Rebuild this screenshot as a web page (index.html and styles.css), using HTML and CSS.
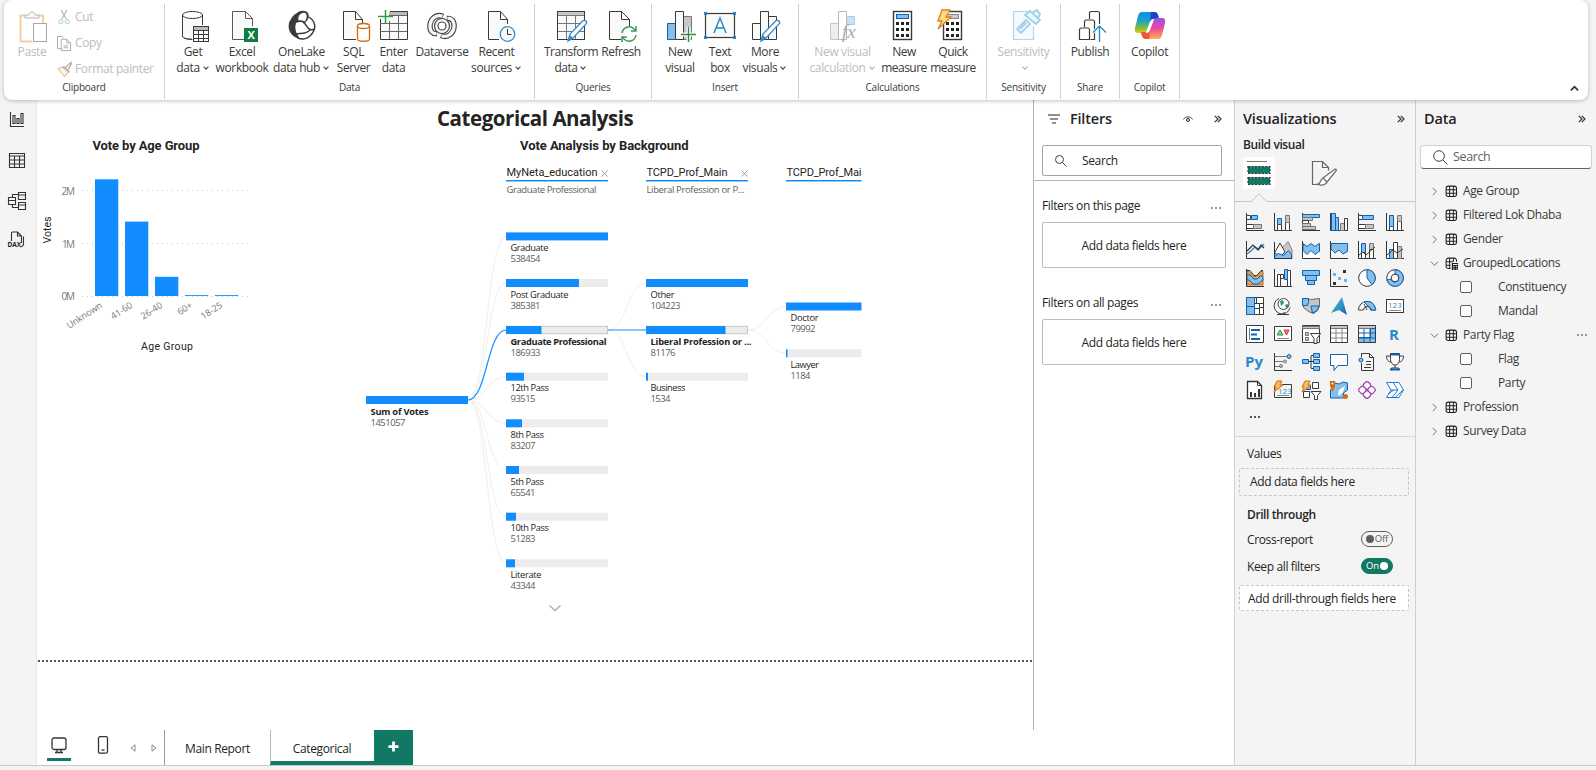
FILE: index.html
```html
<!DOCTYPE html>
<html lang="en">
<head>
<meta charset="utf-8">
<title>Categorical Analysis</title>
<link rel="stylesheet" href="styles.css">
</head>
<body>
<svg class="defs" width="0" height="0">
  <defs>
    <symbol id="tbl" viewBox="0 0 14 14"><rect x="1.2" y="1.2" width="11.2" height="11.2" rx="2.4"/><path d="M5 1v12M9 1v12M1 5h12M1 9h12"/></symbol>
    <symbol id="tblcalc" viewBox="0 0 14 14"><path d="M6 12.400H3.600a2.400 2.400 0 0 1-2.400-2.400V3.600a2.400 2.400 0 0 1 2.400-2.400H10a2.400 2.400 0 0 1 2.400 2.400V5M5 1v12M9 1v4M1 5h8M1 9h5"/><path d="M8 7h6v7H8zM8 9.300h6M8 11.600h6M11 9v5" stroke-width="1.300"/></symbol>
    <symbol id="right" viewBox="0 0 10 10"><path d="M3 1l4 4-4 4"/></symbol>
    <symbol id="down" viewBox="0 0 10 10"><path d="M1 3l4 4 4-4"/></symbol>
    <symbol id="dbl" viewBox="0 0 8 8"><path d="M.8.8L4 4 .8 7.200M3.800.8L7 4 3.800 7.200"/></symbol>
    <symbol id="axes" viewBox="0 0 18 18"><path d="M.5 0v17.500H18" fill="none" stroke="#333"/></symbol>
    <linearGradient id="cpA" x1="0" y1="0" x2="0" y2="1"><stop offset="0" stop-color="#0d91e1"/><stop offset=".4" stop-color="#1a9fd0"/><stop offset=".75" stop-color="#7abf3c"/><stop offset="1" stop-color="#f5c400"/></linearGradient>
    <linearGradient id="cpB" x1="0" y1="0" x2="0" y2="1"><stop offset="0" stop-color="#9a52ee"/><stop offset=".5" stop-color="#ea4a9a"/><stop offset="1" stop-color="#ffb152"/></linearGradient>
    <linearGradient id="arc" x1="0" y1="0" x2="1" y2="1"><stop offset="0" stop-color="#5bc0c8"/><stop offset=".6" stop-color="#2d8fc4"/><stop offset="1" stop-color="#1458a8"/></linearGradient>
  </defs>
</svg>

<header class="ribbon">
  <section class="group clipboard">
    <div class="items">
      <button class="paste off"><svg class="ico" viewBox="0 0 32 32"><path d="M10 4.500H4.500v26H16M22 4.500h5v8" fill="none" stroke="#f7cf9c" stroke-width="2"/><path d="M9 7V4h4c0-4 6-4 6 0h4v3z" fill="#fafafa" stroke="#b5b5b5"/><rect x="17.500" y="12.500" width="13" height="18" fill="#fff" stroke="#a8a8a8"/></svg><span>Paste</span></button>
      <div class="edits off">
        <div><svg viewBox="0 0 16 16"><path d="M4.500 0l5.500 10M10.500 0L5 10" stroke="#a8a8a8" fill="none" stroke-width="1.100"/><circle cx="4" cy="12.500" r="2.200" fill="none" stroke="#9cc8e6"/><circle cx="11" cy="12.500" r="2.200" fill="none" stroke="#9cc8e6"/></svg>Cut</div>
        <div><svg viewBox="0 0 16 16"><path d="M5 13.500H.5V.5h5l2 2M4.500 3.500h6l4 4v8h-10zM10.500 3.500v4h4M7 10.500h5M7 12.500h5" fill="none" stroke="#aaa"/></svg>Copy</div>
        <div><svg viewBox="0 0 16 16"><path d="M1 7l7-2 5 5-5 5.500z" fill="#fdf3e6" stroke="#f0c596" stroke-width="1.300"/><path d="M6 5l7 6M9 6l4-4 2-1.500v2L12 8" fill="none" stroke="#aaa" stroke-width="1.400"/></svg>Format painter</div>
      </div>
    </div>
    <h6>Clipboard</h6>
  </section>
  <section class="group data">
    <div class="items">
      <button><svg class="ico" viewBox="0 0 32 32"><path d="M5.500 4v21c0 2 4 3.500 10 3.500M25.500 4v10" fill="none" stroke="#3b3a39"/><path d="M6 4v21c1 2 5 3 9 3V15h10V4z" fill="#fafafa"/><ellipse cx="15.500" cy="4" rx="10" ry="3.500" fill="#fff" stroke="#3b3a39"/><path d="M5.500 4v21c0 2 4 3 9 3M25.500 4v10" fill="none" stroke="#3b3a39"/><rect x="16.500" y="15.500" width="15" height="15" fill="#fff" stroke="#3b3a39"/><path d="M17 17.500h14" stroke="#bbb" stroke-width="3"/><path d="M16.500 19.500h15M16.500 23.500h15M16.500 27.500h15M21.500 19v12M26.500 19v12" stroke="#3b3a39"/></svg><span>Get</span><span>data<i></i></span></button>
      <button><svg class="ico" viewBox="0 0 32 32"><path d="M18 28.500H6.500V.5h13l7 7V15M19.500.5v7h7" fill="#fafafa" stroke="#5a5a5a"/><rect x="18" y="17" width="14" height="14" fill="#107c41"/><text x="25" y="28" class="xl">X</text></svg><span>Excel</span><span>workbook</span></button>
      <button><svg class="ico" viewBox="0 0 32 32"><path d="M11 2c3-3 9-3 11 0 2 4 0 7-3 10C14 10 9 11 5 16 2 12 5 5 11 2z" fill="#3b3a39"/><path d="M12 9c-1-5 3-7 6-8 4 1 4 6 1 10-4-2-7-1-8-1z" fill="#fff" stroke="#3b3a39"/><path d="M4 9c-4 9 1 17 10 19-4-5-6-11-4-16-2 0-4 2-5 4z" fill="#3b3a39"/><path d="M23 6c7 5 8 12 1 19-3 3-8 4-12 2-3-5-5-10-3-15M17 11c5 3 4 10 12 7M12 27c-5-8 5-1 12-8" fill="none" stroke="#3b3a39" stroke-width="1.500"/></svg><span>OneLake</span><span>data hub<i></i></span></button>
      <button><svg class="ico" viewBox="0 0 32 32"><path d="M18 28.500H5.500V.5h12l7 8V12M17.500.5v8h7" fill="#fafafa" stroke="#3b3a39"/><path d="M19.500 15v13c0 3 12 3 12 0V15" fill="#fff" stroke="#d8690f" stroke-width="1.300"/><ellipse cx="25.500" cy="15" rx="6" ry="2.500" fill="#fff" stroke="#d8690f" stroke-width="1.300"/></svg><span>SQL</span><span>Server</span></button>
      <button><svg class="ico" viewBox="0 0 32 32"><path d="M2.500 8v20.500h27V.5H12" fill="#fafafa" stroke="#3b3a39"/><path d="M11 2.500h18" stroke="#bbb" stroke-width="3"/><path d="M11 4.500h18M2 12.500h27M2 20.500h27M11.500 10v18M20.500 5v23" stroke="#666"/><path d="M7.500-1v13M0 5.500h15" stroke="#2ba144" stroke-width="1.500"/></svg><span>Enter</span><span>data</span></button>
      <button><svg class="ico" viewBox="0 0 32 32"><path d="M17 5.500C10 2.500 4.500 8 4 14c-.5 6 2.500 9 7 8.500" fill="none" stroke="#444" stroke-width="5.500"/><path d="M16.500 5.300C10 3 4.500 8 4 14c-.5 6 2.500 9 6.500 8.500" fill="none" stroke="#f8f8f8" stroke-width="3.200"/><path d="M15 24.500c7 3 12.500-2.500 13-8.500.5-6-2.500-9-7-8.500" fill="none" stroke="#444" stroke-width="5.500"/><path d="M15.500 24.700C22 27 27.500 22 28 16c.5-6-2.500-9-6.500-8.500" fill="none" stroke="#f8f8f8" stroke-width="3.200"/><circle cx="16" cy="15" r="7.500" fill="#f8f8f8" stroke="#444" stroke-width="1.200"/><circle cx="16" cy="15" r="4" fill="#fff" stroke="#444" stroke-width="1.200"/></svg><span>Dataverse</span></button>
      <button><svg class="ico" viewBox="0 0 32 32"><path d="M18 28.500H7.500V.5h12l7 8V13M19.500.5v8h7" fill="#fafafa" stroke="#3b3a39"/><circle cx="26.500" cy="23" r="7.300" fill="#fafafa" stroke="#2f8ccc" stroke-width="1.300"/><path d="M26.500 18v5.500h4" stroke="#3b3a39" fill="none"/></svg><span>Recent</span><span>sources<i></i></span></button>
    </div>
    <h6>Data</h6>
  </section>
  <section class="group queries">
    <div class="items">
      <button><svg class="ico" viewBox="0 0 32 32"><rect x="2.500" y=".5" width="27" height="28" fill="#fafafa" stroke="#3b3a39"/><path d="M3 2.500h26" stroke="#c8c8c8" stroke-width="3"/><path d="M3 4.500h26M3 12.500h26M3 20.500h26M11.500 5v23M20.500 5v23" stroke="#777"/><path d="M13 30l2-7L28 9.500c3-1 4 2 3.500 3L18 27z" fill="#fff" stroke="#2f8ccc" stroke-width="1.300"/><path d="M13 30l2-6 3 3z" fill="#2f8ccc"/></svg><span>Transform</span><span>data<i></i></span></button>
      <button><svg class="ico" viewBox="0 0 32 32"><path d="M16 28.500H4.500V.5h12l8 8V15M16.500.5v8h8" fill="#fafafa" stroke="#3b3a39"/><path d="M17 22a7 7 0 0 1 12-4l2 2M31 15v5h-5M31 24a7 7 0 0 1-12 4l-2-2M17 31v-5h5" fill="none" stroke="#3f9b57" stroke-width="1.500"/></svg><span>Refresh</span></button>
    </div>
    <h6>Queries</h6>
  </section>
  <section class="group insert">
    <div class="items">
      <button><svg class="ico" viewBox="0 0 32 32"><path d="M3.500 12.500h8v16h-8z" fill="#83beec" stroke="#0e62b0"/><path d="M19.500 5.500h8v23h-8z" fill="#c8c6c4" stroke="#777"/><path d="M11.500.5h8v28h-8z" fill="#fafafa" stroke="#3b3a39"/><path d="M24.500 16v15M17 23.500h15" stroke="#fff" stroke-width="4"/><path d="M24.500 16v15M17 23.500h15" stroke="#2e8b42" stroke-width="1.400"/></svg><span>New</span><span>visual</span></button>
      <button><svg class="ico" viewBox="0 0 32 32"><rect x="1.500" y="2.500" width="29" height="24" fill="#fafafa" stroke="#3b3a39" stroke-width="1.200"/><path d="M0 1h3v3H0zM29 1h3v3h-3zM0 25h3v3H0zM29 25h3v3h-3z" fill="#2b88c8"/><path d="M10 22l6-15 6 15M12 17h8" fill="none" stroke="#2b88c8" stroke-width="1.500"/></svg><span>Text</span><span>box</span></button>
      <button><svg class="ico" viewBox="0 0 32 32"><path d="M3.500 12.500h8v16h-8zM19.500 5.500h8v23h-8zM11.500.5h8v28h-8z" fill="#fafafa" stroke="#3b3a39"/><path d="M12 30l2-7L27 9.500c3-1 4 2 3.500 3L17 27z" fill="#fff" stroke="#2f8ccc" stroke-width="1.300"/><path d="M12 30l2-6 3 3z" fill="#2f8ccc"/></svg><span>More</span><span>visuals<i></i></span></button>
    </div>
    <h6>Insert</h6>
  </section>
  <section class="group calc">
    <div class="items">
      <button class="off"><svg class="ico" viewBox="0 0 32 32"><path d="M19.500 5.500h8v8h-8z" fill="#c5e2f7" stroke="#a5cdea"/><path d="M3.500 12.500h8v16h-8z" fill="#eee" stroke="#c5c5c5"/><path d="M11.500.5h8v28h-8z" fill="#fff" stroke="#b8b8b8"/><text x="15" y="27" class="fx">fx</text></svg><span>New visual</span><span>calculation<i></i></span></button>
      <button><svg class="ico" viewBox="0 0 32 32"><rect x="5.500" y=".5" width="18" height="28" fill="#fff" stroke="#3b3a39" stroke-width="1.400"/><rect x="8.500" y="3.500" width="12" height="4" fill="#83beec" stroke="#0e62b0"/><path d="M8 12.500h3m2 0h3m2 0h3M8 18.500h3m2 0h3m2 0h3M8 24.500h3m2 0h3m2 0h3" stroke="#222" stroke-width="3"/></svg><span>New</span><span>measure</span></button>
      <button><svg class="ico" viewBox="0 0 32 32"><rect x="6.500" y=".5" width="18" height="28" fill="#fff" stroke="#3b3a39" stroke-width="1.400"/><rect x="9.500" y="3.500" width="12" height="4" fill="#ccc" stroke="#888"/><path d="M9 12.500h3m2 0h3m2 0h3M9 18.500h3m2 0h3m2 0h3M9 24.500h3m2 0h3m2 0h3" stroke="#222" stroke-width="3"/><path d="M5-1h8L9 6h5L1 18l4-8H1z" fill="#fbdc8a" stroke="#e0801a" stroke-width="1.300"/></svg><span>Quick</span><span>measure</span></button>
    </div>
    <h6>Calculations</h6>
  </section>
  <section class="group sens">
    <div class="items">
      <button class="off"><svg class="ico" viewBox="0 0 32 32"><path d="M21 .5H5.500v28h20V15" fill="#f5faff" stroke="#b0d5ee" stroke-width="1.200"/><path d="M9 18l9-9 4 4-9 9zM17 4l5-4 10 9-4 4zM24 2l5-3 3 4-2 4M12 18l6-6" fill="#eef7fd" stroke="#a2cfec" stroke-width="1.800"/></svg><span>Sensitivity</span><span><i></i></span></button>
    </div>
    <h6>Sensitivity</h6>
  </section>
  <section class="group share">
    <div class="items">
      <button><svg class="ico" viewBox="0 0 32 32"><path d="M16 28.500H5.500V19q0-2 2-2h7q1 0 1 2v9M10.500 16v-5q0-2 2-2h6q2 0 2 2v17.500h-4M15.500 8V2.500q0-2 2-2h6q2 0 2 2V13" fill="none" stroke="#3b3a39" stroke-width="1.200"/><path d="M25.500 31V15M19 21.500l6.500-6.500 6.500 6.500" fill="none" stroke="#fff" stroke-width="3"/><path d="M25.500 31V15M19 21.500l6.500-6.500 6.500 6.500" fill="none" stroke="#2f8ccc" stroke-width="1.400"/></svg><span>Publish</span></button>
    </div>
    <h6>Share</h6>
  </section>
  <section class="group copilot">
    <div class="items">
      <button><svg class="ico" viewBox="0 0 32 32"><path d="M8 1h13q2 0 3 3l1 4h-5q-3 0-4 3l-3 8q-1 3-4 3H4q-4 0-3-5L4 5q1-4 4-4z" fill="url(#cpA)"/><path d="M17 1h4q2 0 3 3l1 4h-5q-3 0-4 3c1-4 0-8 1-10z" fill="#1b44c8"/><path d="M24 28H11q-2 0-3-3l-1-4h5q3 0 4-3l3-8q1-3 4-3h5q4 0 3 5l-3 12q-1 4-4 4z" fill="url(#cpB)"/><path d="M15 28h-4q-2 0-3-3l-1-4h5q3 0 4-3c-1 4 0 8-1 10z" fill="#f2553d"/><path d="M20 8h-1q-2 0-3 3l-3 8-1 3h1q2 0 3-3l3-8z" fill="#fff"/></svg><span>Copilot</span></button>
    </div>
    <h6>Copilot</h6>
  </section>
  <svg class="collapse" viewBox="0 0 10 10"><path d="M1 7l4-4 4 4"/></svg>
</header>

<div class="workspace">
  <nav class="rail">
    <svg viewBox="0 0 18 18"><path d="M2.500 1v14.500H16M5 4.500h2v8H5zM9 7.500h2v5H9zM13 2.500h2v10h-2z"/></svg>
    <svg viewBox="0 0 18 18"><path d="M1.500 2.500h15v14h-15zM1.500 5h15M1.500 9h15M1.500 13h15M6.500 5v11.500M11.500 5v11.500"/></svg>
    <svg viewBox="0 0 18 18"><path d="M.5 6.500h7v7h-7zM.5 9.500h7M10.500 1.500h7v7h-7zM10.500 4h7M10.500 11.500h7v7h-7zM10.500 14h7M4.500 6V3.500h6M4.500 14v2.500h6"/></svg>
    <svg viewBox="0 0 18 18"><path d="M3.500 10V2q0-1 1-1h5l4 4v7M9.500 1v4h4M15.500 5.500v7q0 3-3 3.500"/><text x="-.5" y="15.500" class="dax">DAX</text></svg>
  </nav>

  <div class="middle">
    <div class="middle-top">
      <main class="canvas">
        <h1>Categorical Analysis</h1>
        <div class="visuals">
          <svg class="bars" viewBox="38 135 322 235">
            <text class="vt" x="92.500" y="150" textLength="107">Vote by Age Group</text>
            <path class="grid" d="M82 190.500H251M82 243.500H251M82 296.500H251"/>
            <g class="tick"><text x="61.500" y="194.500" textLength="13.500">2M</text><text x="62" y="247.500" textLength="13">1M</text><text x="61.500" y="299.500" textLength="13.500">0M</text></g>
            <g fill="#118dff"><rect x="95" y="179.300" width="23.300" height="116.700"/><rect x="125" y="221.600" width="23.300" height="74.400"/><rect x="155" y="276.800" width="23.300" height="19.200"/><rect x="185" y="295.100" width="23.300" height=".9"/><rect x="215" y="295.100" width="23.300" height=".9"/></g>
            <g class="tick end"><text transform="translate(103 307) rotate(-33)">Unknown</text><text transform="translate(133 307) rotate(-33)">41-60</text><text transform="translate(163 307) rotate(-33)">26-40</text><text transform="translate(193 307) rotate(-33)">60+</text><text transform="translate(223 307) rotate(-33)">18-25</text></g>
            <text class="ax" transform="translate(51 243.500) rotate(-90)" textLength="27">Votes</text>
            <text class="ax" x="141" y="350" textLength="52">Age Group</text>
          </svg>
          <svg class="tree" viewBox="360 135 510 490">
            <text class="vt" x="520" y="150" textLength="168.500">Vote Analysis by Background</text>
            <g class="hd"><text x="506.500" y="176" textLength="91">MyNeta_education</text><text x="646.500" y="176" textLength="81">TCPD_Prof_Main</text><text x="786.500" y="176" textLength="75">TCPD_Prof_Mai</text></g>
            <path d="M506 180.700h102M646 180.700h102M786 180.700h75.500" stroke="#118dff" stroke-width="1.400"/>
            <path d="M601.500 170.500l6 6m0-6l-6 6M741.500 170.500l6 6m0-6l-6 6" stroke="#999" fill="none"/>
            <g class="val"><text x="506.500" y="193" textLength="90">Graduate Professional</text><text x="646.500" y="193" textLength="98">Liberal Profession or P...</text></g>
            <path class="link" d="M468 400C487 400 487 236.400 506 236.400M468 400C487 400 487 283 506 283M468 400C487 400 487 376.700 506 376.700M468 400C487 400 487 423.300 506 423.300M468 400C487 400 487 470 506 470M468 400C487 400 487 516.700 506 516.700M468 400C487 400 487 563.300 506 563.300M608 330C627 330 627 283 646 283M608 330C627 330 627 376.700 646 376.700M748 330C767 330 767 306.500 786 306.500M748 330C767 330 767 353.300 786 353.300"/>
            <path class="link on" d="M468 400C487 400 487 330 506 330M608 330H646"/>
            <g fill="#ececec"><rect x="506" y="279" width="102" height="8"/><rect x="506.500" y="326.300" width="101" height="7.400" stroke="#c8c8c8"/><rect x="506" y="372.700" width="102" height="8"/><rect x="506" y="419.300" width="102" height="8"/><rect x="506" y="466" width="102" height="8"/><rect x="506" y="512.700" width="102" height="8"/><rect x="506" y="559.300" width="102" height="8"/><rect x="646.500" y="326.300" width="101" height="7.400" stroke="#c8c8c8"/><rect x="646" y="372.700" width="102" height="8"/><rect x="786" y="349.300" width="75.500" height="8"/></g>
            <g fill="#118dff"><rect x="366" y="396" width="102" height="8"/><rect x="506" y="232.400" width="102" height="8"/><rect x="506" y="279" width="73" height="8"/><rect x="506" y="326" width="35.500" height="8"/><rect x="506" y="372.700" width="18" height="8"/><rect x="506" y="419.300" width="16" height="8"/><rect x="506" y="466" width="13" height="8"/><rect x="506" y="512.700" width="10" height="8"/><rect x="506" y="559.300" width="9" height="8"/><rect x="646" y="279" width="102" height="8"/><rect x="646" y="326" width="79.500" height="8"/><rect x="646" y="372.700" width="2" height="8"/><rect x="786" y="302.500" width="75.500" height="8"/><rect x="786" y="349.300" width="1.500" height="8"/></g>
            <g class="nm"><text x="370.500" y="415" textLength="58" class="b">Sum of Votes</text><text x="510.500" y="251.200" textLength="38">Graduate</text><text x="510.500" y="298" textLength="58">Post Graduate</text><text x="510.500" y="345" textLength="96" class="b">Graduate Professional</text><text x="510.500" y="391.300" textLength="38.500">12th Pass</text><text x="510.500" y="438" textLength="33.500">8th Pass</text><text x="510.500" y="485" textLength="33.500">5th Pass</text><text x="510.500" y="531" textLength="38.500">10th Pass</text><text x="510.500" y="578" textLength="31">Literate</text><text x="650.500" y="298" textLength="24">Other</text><text x="650.500" y="345" textLength="101" class="b">Liberal Profession or ...</text><text x="650.500" y="391.300" textLength="35">Business</text><text x="790.500" y="321.300" textLength="28">Doctor</text><text x="790.500" y="368" textLength="28.500">Lawyer</text></g>
            <g class="val"><text x="370.500" y="426" textLength="35">1451057</text><text x="510.500" y="262" textLength="30">538454</text><text x="510.500" y="309" textLength="30">385381</text><text x="510.500" y="356" textLength="30">186933</text><text x="510.500" y="402.300" textLength="25">93515</text><text x="510.500" y="449" textLength="25">83207</text><text x="510.500" y="496" textLength="25">65541</text><text x="510.500" y="542" textLength="25">51283</text><text x="510.500" y="589" textLength="25">43344</text><text x="650.500" y="309" textLength="30">104223</text><text x="650.500" y="356" textLength="25">81176</text><text x="650.500" y="402.300" textLength="20">1534</text><text x="790.500" y="332" textLength="25">79992</text><text x="790.500" y="379" textLength="20">1184</text></g>
            <path d="M549.500 605.500l5.500 5 5.500-5" fill="none" stroke="#b0b0b0" stroke-width="1.600"/>
          </svg>
        </div>
        <div class="page-edge"></div>
      </main>

      <aside class="filters">
        <div class="f-head">
          <svg class="funnel" viewBox="0 0 12 10"><path d="M0 1h12M2 5h8M4 9h4"/></svg>
          <h2>Filters</h2>
          <svg class="eye" viewBox="0 0 10 8"><path d="M.5 4.500C2 1 8 1 9.500 4.500" fill="none" stroke="#444"/><circle cx="5" cy="5" r="1.500" fill="none" stroke="#222"/></svg>
          <svg class="dbl"><use href="#dbl"/></svg>
        </div>
        <div class="f-search"><svg viewBox="0 0 12 12"><circle cx="4.500" cy="4.500" r="4"/><path d="M7.500 7.500l4 4"/></svg><span>Search</span></div>
        <div class="f-sec"><div class="f-title"><span>Filters on this page</span><b class="dots"></b></div><div class="well">Add data fields here</div></div>
        <div class="f-sec"><div class="f-title"><span>Filters on all pages</span><b class="dots"></b></div><div class="well">Add data fields here</div></div>
      </aside>
    </div>

    <footer class="tabs">
      <span class="view on"><svg viewBox="0 0 16 17"><rect x="1" y="1" width="14" height="11.500" rx="2"/><path d="M6 13v2M10 13v2M4 15.500h8"/></svg></span>
      <span class="view"><svg viewBox="0 0 16 18"><rect x="3.500" y=".7" width="9" height="16.500" rx="1.500"/><path d="M6.500 14h3"/></svg></span>
      <svg class="tri" viewBox="0 0 6 8"><path d="M5 .8v6.400L1 4z"/></svg>
      <svg class="tri" viewBox="0 0 6 8"><path d="M1 .8v6.400L5 4z"/></svg>
      <span class="tab main">Main Report</span>
      <span class="tab active">Categorical</span>
      <span class="add"><svg viewBox="0 0 12 12"><path d="M6 .5v11M.5 6h11"/></svg></span>
    </footer>
  </div>

  <aside class="viz">
    <div class="p-head"><h2>Visualizations</h2><svg class="dbl"><use href="#dbl"/></svg></div>
    <h3>Build visual</h3>
    <div class="modes">
      <span class="mode on"><svg viewBox="0 0 32 32"><path d="M4 4.500h20" stroke="#777"/><path d="M5 9.500h22v7H5zM5 20.500h22v7H5z" fill="#117865" stroke="#333" stroke-width="1.200" stroke-dasharray="2 1.500"/></svg></span>
      <span class="mode"><svg viewBox="0 0 32 32"><path d="M12 27.500H4.500v-23h10l6 6v3M14.500 4.500v6h6" fill="none" stroke="#666" stroke-width="1.200"/><path d="M15 21L27 12q2 0 1 2l-9 11zM10 27c3 0 2-5 5-6l4 4c-1 3-6 4-9 2z" fill="#fff" stroke="#666" stroke-width="1.200"/></svg></span>
    </div>
    <svg class="rule" viewBox="0 0 180 10"><path d="M0 8.500H16.500L24 .8l7.500 7.700H180"/></svg>
    <div class="gallery">
      <svg viewBox="0 0 18 18"><use href="#axes"/><path d="M.5 2.500h4v4h-4zM.5 11.500h7v4h-7z" class="w"/><path d="M5.500 2.500h6v4h-6z" class="u"/><path d="M7.500 11.500h8v4h-8z" class="g"/></svg>
      <svg viewBox="0 0 18 18"><use href="#axes"/><path d="M3.500 11.500h4v6h-4zM11.500 9.500h4v8h-4z" class="w"/><path d="M3.500 5.500h4v6h-4z" class="u"/><path d="M11.500 2.500h4v7h-4z" class="g"/></svg>
      <svg viewBox="0 0 18 18"><use href="#axes"/><path d="M.5 1.500h17v3H.5z" class="u"/><path d="M.5 4.500h10v3H.5zM.5 13.500h13v3H.5z" class="g"/><path d="M.5 7.500h6v3h-6z" class="w"/><path d="M.5 10.500h8v3h-8z" class="g"/></svg>
      <svg viewBox="0 0 18 18"><use href="#axes"/><path d="M1.500.5h4v17h-4zM5.500 4.500h3v13h-3z" class="u"/><path d="M10.500 10.500h4v7h-4z" class="g"/><path d="M14.500 5.500h3v12h-3z" class="w"/></svg>
      <svg viewBox="0 0 18 18"><use href="#axes"/><path d="M.5 2.500h4v4h-4zM.5 11.500h7v4h-7z" class="w"/><path d="M4.500 2.500h11v4h-11z" class="u"/><path d="M7.500 11.500h8v4h-8z" class="g"/></svg>
      <svg viewBox="0 0 18 18"><use href="#axes"/><path d="M3.500 13.500h4v4h-4zM11.500 8.500h4v9h-4z" class="w"/><path d="M3.500 2.500h4v11h-4z" class="u"/><path d="M11.500 2.500h4v6h-4z" class="g"/></svg>

      <svg viewBox="0 0 18 18"><use href="#axes"/><path d="M1 13l5-4 3-3 4 2 5-5" fill="none" stroke="#2b88c8" stroke-width="1.300"/><path d="M1 10l6-6 5 5 3-5 3 3" fill="none" stroke="#333" stroke-width="1.200"/></svg>
      <svg viewBox="0 0 18 18"><path d="M7 8l7-7.500 4 8v9H9z" fill="#c8c6c4" stroke="#888"/><path d="M.5 12L6 2l5 9-4 4z" class="w"/><path d="M.5 17.500v-2l4-3 5 2 5-5 3 4v4z" class="u"/><path d="M.5 1v16.500H18" fill="none" stroke="#333"/></svg>
      <svg viewBox="0 0 18 18"><path d="M1 9l5 4 4-4 3 3 4-3v8H1z" fill="#fff"/><path d="M1 2.500l4 3 4-3 4 3 4-3h.5v8h-.500l-4 3-4-4-4 4-4-4z" class="u"/><use href="#axes"/></svg>
      <svg viewBox="0 0 18 18"><path d="M1 2.500h16.500v8L13 13l-4-4-4 3-4-4z" class="u"/><use href="#axes"/></svg>
      <svg viewBox="0 0 18 18"><use href="#axes"/><path d="M3.500 2.500h4v9h-4z" class="u"/><path d="M11.500 2.500h4v6h-4z" class="g"/><path d="M3.500 11.500h4v6h-4zM11.500 8.500h4v9h-4z" class="w"/><path d="M1 14l4-3 3 3 9-8" class="k"/></svg>
      <svg viewBox="0 0 18 18"><use href="#axes"/><path d="M3.500 8.500h4v9h-4z" class="u"/><path d="M11.500 5.500h4v12h-4z" class="g"/><path d="M7.500 1.500h4v16h-4z" class="w"/><path d="M1 14l6-5 4 3 6-4" class="k"/></svg>

      <svg viewBox="0 0 18 18"><path d="M1 10l3 0 5 4 8-4v6H1z" fill="#f2a04a" stroke="#b8600c"/><path d="M1 2.500h2l5 5h2l5-5h2v4l-5 4H7l-6-4z" fill="#f2a04a" stroke="#b8600c"/><path d="M1 6h3l4 4h3l3-3h3v4l-5 4H7l-4-4H1z" class="u"/><path d="M1 1.500h3l4 5h3l4-5h2" class="k"/><use href="#axes"/></svg>
      <svg viewBox="0 0 18 18"><use href="#axes"/><path d="M3.500 5.500h3v12h-3zM6.500 5.500h3v4h-3zM13.500 1.500h3v16h-3z" class="w"/><path d="M10.500.5h3v10h-3z" class="u"/></svg>
      <svg viewBox="0 0 18 18"><path d="M.5 1.500h17v5H.5zM3.500 6.500h11v5h-11zM5.500 11.500h7v4h-7z" class="u"/></svg>
      <svg viewBox="0 0 18 18"><use href="#axes"/><path d="M3 4h3v3H3zM8 8h3v3H8zM14 10h3v3h-3z" fill="#6cb4ea"/><path d="M13 1h3v3h-3zM3 13h3v3H3z" fill="#333"/></svg>
      <svg viewBox="0 0 18 18"><circle cx="9" cy="9" r="8.300" class="w"/><path d="M9 .7a8.300 8.300 0 0 1 5 14.800L9 9z" class="u"/></svg>
      <svg viewBox="0 0 18 18"><circle cx="9" cy="9" r="8.300" class="w"/><path d="M9 .7A8.300 8.300 0 1 1 1 11l4-1a4 4 0 1 0 4-5z" class="u"/><circle cx="9" cy="9" r="3.800" class="w"/></svg>

      <svg viewBox="0 0 18 18"><path d="M.5.5h17v17H.5z" class="w"/><path d="M.5.5h8v9h-8zM.5 9.500h8v8h-8z" class="u"/><path d="M8.500 6.500h9M13.500 6.500v11M8.500 11.500h5M13.500 10.500h4M10.500.5v6" class="k"/></svg>
      <svg viewBox="0 0 18 18"><circle cx="9.500" cy="7" r="5.500" fill="#fff" stroke="#444"/><path d="M6 4l3-1 1 3-3 3zM11 8l3-1v3l-2 1z" fill="#2e9b57"/><path d="M5 1.500a8 8 0 1 0 11 9M10 15v2.500M3 17.500h12" class="k"/></svg>
      <svg viewBox="0 0 18 18"><path d="M.5 1.500h5l3 1 9-1v7l-2 5-4 3-5-2-5-4z" fill="#c8c6c4" stroke="#666"/><path d="M.5 1.500h6v4l-1 3h-5zM9 9h8.500l-3 5-4 2z" class="u"/></svg>
      <svg viewBox="0 0 18 18"><path d="M12 0l5 18-8-5-8 3z" fill="url(#arc)"/></svg>
      <svg viewBox="0 0 18 18"><path d="M.5 13a8.500 8.500 0 0 1 17 0h-5a3.500 3.500 0 0 0-7 0z" class="w"/><path d="M6 5q7-2 10 3l2 5h-5q0-3-3-4z" class="u"/><path d="M9 13L6 7" class="k"/></svg>
      <svg viewBox="0 0 18 18"><rect x=".5" y="2.500" width="17" height="13" class="w"/><text x="2" y="11" class="n">123</text><path d="M3 13.500h12" stroke="#888"/></svg>

      <svg viewBox="0 0 18 18"><path d="M.5.5h17v17H.5z" class="w"/><path d="M3.500 3v12" stroke="#777"/><path d="M5 5h9M5 9.500h6M5 14h9" stroke="#0e62b0" stroke-width="2"/></svg>
      <svg viewBox="0 0 18 18"><path d="M.5 1.500h17v14H.5z" class="w"/><path d="M3 10l3-5 3 5z" fill="#8fd19e" stroke="#2e8b42"/><path d="M10 5h5l-2.500 5z" fill="#f08080" stroke="#d13438"/><path d="M3 13.500h12" stroke="#888"/></svg>
      <svg viewBox="0 0 18 18"><path d="M.5.5h17v17H.5z" class="w"/><path d="M.5 1.500h17v2H.5z" class="g"/><path d="M3.500 7.500h3v3h-3zM3.500 12.500h3v3h-3z" class="g"/><path d="M8.500 8.500h10l-3.500 5v5h-3v-5z" class="w"/></svg>
      <svg viewBox="0 0 18 18"><path d="M.5.5h17v17H.5z" class="w"/><path d="M.5.5h17v3H.5z" class="g"/><path d="M6 4v13M12 4v13M1 8h16M1 13h16" stroke="#888"/><path d="M.5.5h17v17H.5z" class="k"/></svg>
      <svg viewBox="0 0 18 18"><path d="M.5.5h17v17H.5z" class="w"/><path d="M.5.5h17v3H.5z" class="g"/><path d="M12.500 3.500h5v14H.5v-5h12z" class="u"/><path d="M6 4v13M12 4v13M1 8h16M1 13h16" stroke="#0e62b0"/><path d="M.5.5h17v17H.5z" class="k"/></svg>
      <svg viewBox="0 0 18 18"><text x="3" y="14.500" class="r">R</text></svg>

      <svg viewBox="0 0 18 18"><text x="-1" y="14" class="r">Py</text></svg>
      <svg viewBox="0 0 18 18"><use href="#axes"/><path d="M1 3.500h12M1 8.500h8M1 13.500h5" stroke="#777"/><circle cx="15" cy="3.500" r="2" class="u"/><circle cx="11" cy="8.500" r="1.500" class="g"/><circle cx="7" cy="13" r="1.500" class="g"/></svg>
      <svg viewBox="0 0 18 18"><path d="M6 8.500h5M9 3v12M9 2.500h3M9 15.500h3" stroke="#333"/><path d="M.5 6.500h6v4h-6zM11.500.5h6v4h-6zM11.500 6.500h6v4h-6zM11.500 13.500h6v4h-6z" class="u"/></svg>
      <svg viewBox="0 0 18 18"><path d="M.5 1.500h17v11H8l-4 5v-5H.5z" fill="#fff" stroke="#0e62b0"/></svg>
      <svg viewBox="0 0 18 18"><path d="M3.500 4V.5h8l4 4v13h-12V10M11.500.5v4h4M8 8.500h5M8 11.500h5M6 14.500h7" class="k"/><circle cx="3" cy="7" r="2" class="u"/></svg>
      <svg viewBox="0 0 18 18"><path d="M4.500 3h-4c0 4 2 6 5 6M13.500 3h4c0 4-2 6-5 6M9 12v3M5.500 17v-2h7v2" class="k"/><path d="M4.500.5h9v6c0 3-2 5.500-4.500 5.500S4.500 9.500 4.500 6.500z" class="w"/><path d="M4 1.500h10M4 16.500h10" stroke="#0e62b0" stroke-width="2"/></svg>

      <svg viewBox="0 0 18 18"><path d="M1.500.5h10l4 4v13h-14z" fill="#fff" stroke="#333" stroke-width="1.300"/><path d="M11.500.5v4h4" class="k"/><path d="M4 11h2v5H4zM8 12h2v4H8zM12 8h2v8h-2z" fill="#333"/></svg>
      <svg viewBox="0 0 18 18"><path d="M.5 4v12.500h17V3.500H8" class="k"/><path d="M3 14.500h12" stroke="#888"/><text x="4" y="12.500" class="n">123</text><path d="M3 0h5L6 4h3L0 11l2-5H0z" fill="#f6bd60" stroke="#d8690f"/></svg>
      <svg viewBox="0 0 18 18"><path d="M10.500 1.500h6v6h-6zM1.500 10.500h6v6h-6z" class="w"/><path d="M4.500 4.500h4v4h-4z" class="u"/><path d="M9 10.500h10l-3.500 4v4h-3v-4z" class="w"/><path d="M3 0h5L6 4h3L0 11l2-5H0z" fill="#f6bd60" stroke="#d8690f"/></svg>
      <svg viewBox="0 0 18 18"><path d="M5 2l4 1 4-2 4.500 1v7l-4 3v5H.5V9z" class="u"/><path d="M8 13l1-4 6-4-2 6-4 4z" fill="#fff"/><path d="M0 0h5v5l-2.500 6L0 5z" fill="#d8690f"/><circle cx="2.500" cy="2.500" r="1" fill="#fff"/><circle cx="15.500" cy="15.500" r="2.500" fill="#d8690f"/></svg>
      <svg viewBox="0 0 18 18"><g transform="rotate(45 9 9)" fill="#fff" stroke="#9b3fa5" stroke-width="1.200"><rect x="2.500" y="2.500" width="6.500" height="6.500" rx="2"/><rect x="9" y="2.500" width="6.500" height="6.500" rx="2"/><rect x="2.500" y="9" width="6.500" height="6.500" rx="2"/><rect x="9" y="9" width="6.500" height="6.500" rx="2"/></g></svg>
      <svg viewBox="0 0 18 18"><path d="M.5 1.500H13l4.500 7.500L13 16.500H.5L5 9zM7 1.500l5 7.500-6 7.500M5 9h7M9 16.500L17 9M2 13l6-4" fill="#fff" stroke="#1c7cd8"/></svg>
    </div>
    <b class="dots more"></b>
    <div class="fields">
      <label>Values</label>
      <div class="drop">Add data fields here</div>
      <h3>Drill through</h3>
      <div class="opt"><span>Cross-report</span><span class="toggle"><u></u>Off</span></div>
      <div class="opt second"><span>Keep all filters</span><span class="toggle on">On<u></u></span></div>
      <div class="drop solid">Add drill-through fields here</div>
    </div>
  </aside>

  <aside class="fieldlist">
    <div class="p-head"><h2>Data</h2><svg class="dbl"><use href="#dbl"/></svg></div>
    <div class="d-search"><svg viewBox="0 0 15 15"><circle cx="6" cy="6" r="5.300"/><path d="M9.800 9.800l4.700 4.700"/></svg><span>Search</span></div>
    <ul>
      <li><svg class="c"><use href="#right"/></svg><svg class="t"><use href="#tbl"/></svg>Age Group</li>
      <li><svg class="c"><use href="#right"/></svg><svg class="t"><use href="#tbl"/></svg>Filtered Lok Dhaba</li>
      <li><svg class="c"><use href="#right"/></svg><svg class="t"><use href="#tbl"/></svg>Gender</li>
      <li><svg class="c"><use href="#down"/></svg><svg class="t"><use href="#tblcalc"/></svg>GroupedLocations</li>
      <li class="leaf"><s></s>Constituency</li>
      <li class="leaf"><s></s>Mandal</li>
      <li><svg class="c"><use href="#down"/></svg><svg class="t"><use href="#tbl"/></svg>Party Flag<b class="dots"></b></li>
      <li class="leaf"><s></s>Flag</li>
      <li class="leaf"><s></s>Party</li>
      <li><svg class="c"><use href="#right"/></svg><svg class="t"><use href="#tbl"/></svg>Profession</li>
      <li><svg class="c"><use href="#right"/></svg><svg class="t"><use href="#tbl"/></svg>Survey Data</li>
    </ul>
  </aside>
</div>
</body>
</html>
```
FILE: styles.css
```css
* { box-sizing: border-box; margin: 0; padding: 0; }
body { width: 1596px; height: 770px; overflow: hidden; display: flex; flex-direction: column; background: #f4f4f4; font: 12px/16px "Open Sans", "Noto Sans", sans-serif; letter-spacing: -.37px; color: #252423; }
svg { display: block; overflow: visible; flex: none; }
.defs { position: absolute; }
button { font: inherit; letter-spacing: inherit; color: inherit; background: none; border: 0; }
h2 { font-size: 14.5px; font-weight: 600; line-height: 20px; letter-spacing: -.2px; }
h3 { font-size: 12px; font-weight: 600; line-height: 16px; letter-spacing: -.4px; }

/* Ribbon */
.ribbon { position: relative; z-index: 2; flex: none; display: flex; width: 1584px; height: 100px; margin-left: 4px; padding-top: 4px; background: #fff; border-radius: 8px; box-shadow: 0 1px 4px rgba(0,0,0,.25); color: #3b3a39; }
.group { height: 95px; border-right: 1px solid #d0d0d0; display: flex; flex-direction: column; }
.items { display: flex; flex: 1; min-height: 0; }
.items button { display: flex; flex-direction: column; align-items: center; padding-top: 7px; white-space: nowrap; }
.items button span { height: 16px; line-height: 16px; display: flex; align-items: center; justify-content: center; }
.ico { width: 32px; height: 32px; margin-bottom: 1px; }
.group h6 { height: 19px; font-size: 10px; font-weight: 400; line-height: 15px; text-align: center; letter-spacing: -.2px; }
.items i { width: 4px; height: 4px; margin: -2px 2px 0 4px; border: solid #3b3a39; border-width: 0 1.500px 1.500px 0; transform: rotate(45deg); }
.off, .items .off { color: #bebcba; }
.items .off i { border-color: #aaa; }
.clipboard { width: 161px; }
.paste { width: 53px; padding-left: 3px; }
.edits div { display: flex; align-items: center; gap: 3px; height: 26px; line-height: 26px; }
.edits svg { width: 15px; height: 15px; }
.data { width: 370px; }
.data .items { padding-left: 4px; }
.data button:nth-child(1) { width: 48px; }
.data button:nth-child(2) { width: 50px; }
.data button:nth-child(3) { width: 69px; }
.data button:nth-child(4) { width: 35px; }
.data button:nth-child(5) { width: 45px; }
.data button:nth-child(6) { width: 52px; }
.data button:nth-child(7) { width: 57px; }
.queries { width: 117px; }
.queries .items { padding-left: 4px; }
.queries button:nth-child(1) { width: 64px; letter-spacing: -.5px; }
.queries button:nth-child(2) { width: 36px; letter-spacing: -.5px; }
.insert { width: 147px; }
.insert .items { padding-left: 6px; }
.insert button:nth-child(1) { width: 44px; }
.insert button:nth-child(2) { width: 36px; }
.insert button:nth-child(3) { width: 54px; }
.calc { width: 188px; }
.calc .items { padding-left: 6px; }
.calc button:nth-child(1) { width: 75px; }
.calc button:nth-child(2) { width: 48px; letter-spacing: -.5px; }
.calc button:nth-child(3) { width: 50px; letter-spacing: -.5px; }
.sens { width: 74px; }
.share { width: 59px; }
.copilot { width: 60px; }
.sens button, .share button, .copilot button { width: 100%; }
.collapse { width: 9px; height: 9px; margin: 80px 9px 0 auto; fill: none; stroke: #333; stroke-width: 2; }
.xl { font: bold 11px "Open Sans", sans-serif; fill: #fff; text-anchor: middle; }
.fx { font: italic 19px "Liberation Serif", serif; fill: #aaa; letter-spacing: 0; }

/* Work area */
.workspace { height: 666px; display: flex; border-bottom: 1px solid #c8c8c8; }
.rail { width: 37px; padding: 11px 0 0 8px; display: flex; flex-direction: column; gap: 22px; border-right: 1px solid #eaeaea; }
.rail svg { width: 18px; height: 18px; fill: none; stroke: #333; stroke-width: 1.100; }
.dax { font: bold 6.500px "Open Sans", sans-serif; fill: #222; stroke: none; letter-spacing: 0; }
.middle { width: 1197px; background: #fff; display: flex; flex-direction: column; }
.middle-top { display: flex; height: 630px; }
.canvas { width: 996px; }
.canvas h1 { height: 35px; padding: 4px 0 0 400px; font-size: 20.500px; line-height: 28px; letter-spacing: -.45px; white-space: nowrap; }
.visuals { display: flex; padding-left: 1px; height: 525px; }
.bars { width: 322px; height: 235px; }
.tree { width: 510px; height: 490px; }
.page-edge { height: 2px; margin-left: 1px; background: repeating-linear-gradient(90deg, #555 0 2px, transparent 2px 4px); }
.vt { font: 700 13px Roboto, sans-serif; fill: #252423; letter-spacing: 0; }
.ax, .hd { font: 10.500px Roboto, sans-serif; fill: #252423; letter-spacing: 0; }
.hd { font-size: 11px; }
.tick { font-size: 10px; fill: #777; letter-spacing: -.1px; }
.end { text-anchor: end; font-size: 9.200px; }
.val { font-size: 9.500px; fill: #605e5c; letter-spacing: 0; }
.nm { font-size: 9.300px; fill: #252423; letter-spacing: 0; }
.b { font-weight: 700; }
.grid { stroke: #c4c4c4; stroke-dasharray: 1 4; fill: none; }
.link { fill: none; stroke: #efefef; }
.link.on { stroke: #118dff; stroke-width: 1.200; }

/* Filters */
.filters { width: 201px; border-left: 1px solid #b3b0ad; }
.f-head { display: flex; align-items: center; height: 37px; padding-left: 14px; }
.funnel { width: 12px; height: 10px; margin-right: 10px; stroke: #222; stroke-width: 1.200; }
.filters h2 { width: 113px; }
.eye { width: 10px; height: 8px; margin-right: 21px; }
.dbl { width: 8px; height: 8px; fill: none; stroke: #333; stroke-width: 1.200; }
.f-search { display: flex; align-items: center; width: 180px; height: 31px; margin: 8px 0 4px 8px; padding-left: 12px; gap: 15px; border: 1px solid #a6a4a2; border-radius: 2px; }
.f-search svg { width: 12px; height: 12px; fill: none; stroke: #444; }
.f-sec { padding: 17px 8px 0; height: 97px; }
.f-search + .f-sec { border-top: 1px solid #b3b0ad; height: 108px; padding-top: 17px; }
.f-sec + .f-sec { padding-top: 7px; }
.f-title { display: flex; justify-content: space-between; align-items: center; padding-right: 5px; height: 24px; padding-bottom: 8px; line-height: 16px; }
.f-title .dots { margin-top: 3px; }
.well { height: 46px; border: 1px solid #c0bebc; border-radius: 2px; text-align: center; line-height: 45px; }
.dots { width: 10px; height: 2px; background: repeating-linear-gradient(90deg, #999 0 2px, transparent 2px 4px); display: block; }

/* Page tabs */
.tabs { display: flex; height: 35px; align-items: stretch; }
.view { width: 24px; margin-left: 10px; padding: 7px 4px 0; height: 31px; }
.view + .view { margin-left: 20px; padding-top: 6px; }
.view.on { border-bottom: 3px solid #117865; }
.view svg { width: 16px; fill: none; stroke: #333; stroke-width: 1.300; }
.tri { width: 6px; height: 8px; margin: 14px 0 0 15px; fill: none; stroke: #888; }
.tri + .tri { margin-left: 15px; margin-right: 7px; }
.tab { border-left: 1px solid #b8b8b8; text-align: center; line-height: 38px; }
.tab.main { width: 106px; border-color: #999; }
.tab.active { width: 104px; border-bottom: 4px solid #117865; padding-right: 1px; }
.add { width: 39px; background: #117865; padding: 11px 14px; }
.add svg { width: 11px; height: 11px; stroke: #fff; stroke-width: 3; }

/* Visualizations */
.viz { width: 181px; border-left: 1px solid #d0d0d0; }
.p-head { display: flex; align-items: center; justify-content: space-between; height: 37px; padding: 0 10px 0 8px; }
.viz h3 { padding-left: 8px; line-height: 16px; }
.viz > h3 { height: 20px; }
.modes { display: flex; gap: 33px; padding-left: 8px; height: 36px; }
.mode { width: 32px; height: 32px; border-radius: 2px; }
.mode.on { background: #fff; }
.rule { width: 180px; height: 10px; fill: none; stroke: #c8c8c8; }
.gallery { display: grid; grid-template-columns: repeat(6, 18px); grid-auto-rows: 18px; gap: 10px; padding: 10px 0 0 11px; }
.gallery svg { width: 18px; height: 18px; }
.u { fill: #83beec; stroke: #0e62b0; }
.g { fill: #c8c6c4; stroke: #797775; }
.w { fill: #fff; stroke: #3b3a39; }
.k { fill: none; stroke: #3b3a39; }
.n { font: 8px "Open Sans", sans-serif; fill: #2b88c8; letter-spacing: 0; }
.r { font: bold 15px "Open Sans", sans-serif; fill: #2b88c8; letter-spacing: 0; }
.dots.more { margin: 17px 0 0 15px; background: repeating-linear-gradient(90deg, #555 0 2px, transparent 2px 4px); }
.fields { margin-top: 18px; border-top: 1px solid #d8d8d8; padding: 8px 6px 0 4px; }
.fields label { display: block; padding-left: 8px; height: 23px; line-height: 18px; }
.drop { height: 28px; line-height: 26px; border: 1px dashed #c8c6c4; padding-left: 10px; border-radius: 2px; white-space: nowrap; }
.fields h3 { margin-top: 11px; height: 24px; }
.opt { display: flex; justify-content: space-between; padding: 0 16px 0 8px; height: 27px; line-height: 18px; }
.opt .toggle { display: flex; align-items: center; justify-content: space-between; width: 32px; height: 16px; border: 1px solid #605e5c; border-radius: 8px; padding: 0 4px; font-size: 9.500px; line-height: 14px; color: #605e5c; letter-spacing: -.2px; }
.toggle u { width: 8px; height: 8px; border-radius: 50%; background: #605e5c; }
.opt .toggle.on { background: #117865; border-color: #117865; color: #fff; }
.toggle.on u { background: #fff; }
.drop.solid { height: 26px; line-height: 25px; background: #fff; padding-left: 8px; letter-spacing: -.33px; }

/* Data */
.fieldlist { width: 181px; border-left: 1px solid #d0d0d0; }
.fieldlist .p-head { padding-left: 8px; }
.d-search { display: flex; align-items: center; gap: 5px; width: 172px; height: 24px; margin: 8px 0 10px 4px; padding-left: 12px; background: #fff; border: 1px solid #d0d0d0; border-bottom-color: #616161; border-radius: 4px; font-size: 12.500px; color: #616161; }
.d-search svg { width: 15px; height: 15px; fill: none; stroke: #444; }
ul { list-style: none; }
li { display: flex; align-items: center; height: 24px; padding-left: 14px; color: #3b3a39; }
li .c { width: 9px; height: 9px; margin-right: 6px; fill: none; stroke: #666; }
li .t { width: 13px; height: 13px; margin-right: 5px; fill: none; stroke: #222; stroke-width: 1.100; }
li.leaf { padding-left: 44px; }
li s { width: 12px; height: 12px; margin-right: 26px; border: 1px solid #605e5c; border-radius: 2px; background: #fff; }
li .dots { margin: 0 9px 0 auto; }
```
